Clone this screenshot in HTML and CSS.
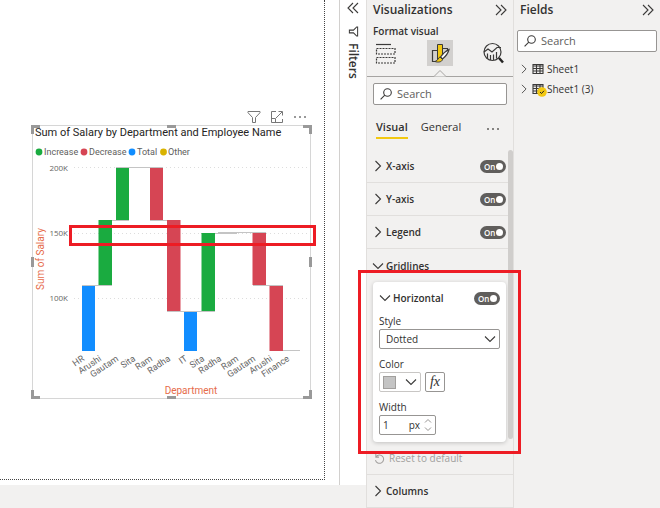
FILE: index.html
```html
<!DOCTYPE html>
<html lang="en">
<head>
<meta charset="utf-8">
<title>Report editor</title>
<link rel="stylesheet" href="styles.css">
</head>
<body>
<svg class="defs" aria-hidden="true">
  <symbol id="chevron" viewBox="0 0 12 12"><path d="M3.5 1 8.5 6l-5 5"/></symbol>
  <symbol id="double" viewBox="0 0 12 12"><path d="M1 1l5 5-5 5M6 1l5 5-5 5"/></symbol>
  <symbol id="lens" viewBox="0 0 12 12"><circle cx="7.5" cy="4.5" r="3.8"/><path d="M4.8 7.2.6 11.4"/></symbol>
  <symbol id="table" viewBox="0 0 12 12"><path d="M1 1.5h10v9H1zM1 3h10M1 5.5h10M1 8h10M4.5 2v8.500M8 2v8.500"/></symbol>
</svg>
<div class="app">
  <main class="canvas">
    <div class="sheet">
      <div class="visual-tools">
        <button aria-label="Filter"><svg class="icon tool" viewBox="0 0 14 14"><path d="M1 1.500h12v1.200L8.500 7.500v5h-3v-5L1 2.700z"/></svg></button>
        <button aria-label="Focus mode"><svg class="icon tool" viewBox="0 0 14 14"><path d="M6 1.500H1.500v11h11V9M1.500 8.500h4v4M6 8l6-6M8.500 1.500h4v4"/></svg></button>
        <button aria-label="More options"><svg class="icon tool dots" viewBox="0 0 14 14"><circle cx="2" cy="7" r="1"/><circle cx="7" cy="7" r="1"/><circle cx="12" cy="7" r="1"/></svg></button>
      </div>
      <figure class="visual">
        <svg class="chart" viewBox="31 125 281 274" role="img" aria-label="Sum of Salary by Department and Employee Name">
          <rect class="frame" x="32.500" y="125.500" width="278" height="273"/>
          <g class="handle">
            <path d="M31 125h9v3h-6v6h-3zM312 125h-9v3h6v6h3zM31 399h9v-3h-6v-6h-3zM312 399h-9v-3h6v-6h3z"/>
            <path d="M167 125h9v3h-9zM167 396h9v3h-9zM31 257h3v10h-3zM309 257h3v10h-3z"/>
          </g>
          <text class="title" x="35" y="136">Sum of Salary by Department and Employee Name</text>
          <g class="legend">
            <circle class="inc" cx="39" cy="152" r="3.400"/><text x="44" y="155">Increase</text>
            <circle class="dec" cx="84" cy="152" r="3.400"/><text x="89" y="155">Decrease</text>
            <circle class="tot" cx="132" cy="152" r="3.400"/><text x="137" y="155">Total</text>
            <circle class="oth" cx="163.500" cy="152" r="3.400"/><text x="168" y="155">Other</text>
          </g>
          <path class="grid" d="M74 167.500H307M74 233.500H307M74 298.500H307"/>
          <g class="ticks"><text x="68" y="171">200K</text><text x="68" y="236">150K</text><text x="68" y="301">100K</text></g>
          <path class="link" d="M82 285.500H112M99 220.500H129M116 167.500H163M150 220.500H180M167 311.500H215M201 233.500H237M218 232.500H266M253 285.500H283M270 350.500H300"/>
          <path class="tot" d="M82 286h13v65H82zM184 312h13v39h-13z"/>
          <path class="inc" d="M98.500 220H112v65H98.500zM116 168h13v52h-13zM201.500 233H215v78h-13.500z"/>
          <path class="dec" d="M150 168h13v52h-13zM167 220h13.500v91H167zM252.500 233H266v52h-13.500zM269.500 286H283v65h-13.500z"/>
          <g class="names">
            <text transform="translate(85 360) rotate(-34)">HR</text>
            <text transform="translate(102 360) rotate(-34)">Arushi</text>
            <text transform="translate(119 360) rotate(-34)">Gautam</text>
            <text transform="translate(136 360) rotate(-34)">Sita</text>
            <text transform="translate(153 360) rotate(-34)">Ram</text>
            <text transform="translate(171 360) rotate(-34)">Radha</text>
            <text transform="translate(188 360) rotate(-34)">IT</text>
            <text transform="translate(205 360) rotate(-34)">Sita</text>
            <text transform="translate(222 360) rotate(-34)">Radha</text>
            <text transform="translate(239 360) rotate(-34)">Ram</text>
            <text transform="translate(256 360) rotate(-34)">Gautam</text>
            <text transform="translate(273 360) rotate(-34)">Arushi</text>
            <text transform="translate(290 360) rotate(-34)">Finance</text>
          </g>
          <text class="axis" x="191" y="394">Department</text>
          <text class="axis" transform="translate(44 259) rotate(-90)">Sum of Salary</text>
        </svg>
        <div class="callout gridline-callout"></div>
      </figure>
    </div>
  </main>

  <aside class="filters">
    <button aria-label="Expand filters"><svg class="icon flip" viewBox="0 0 12 12"><use href="#double"/></svg></button>
    <svg class="icon funnel" viewBox="0 0 12 12"><path d="M10.500 1v10h-1L6 7.500H1.500v-3H6L9.500 1z"/></svg>
    <span class="filters-name">Filters</span>
  </aside>

  <section class="pane viz">
    <header class="pane-head"><h2>Visualizations</h2><button aria-label="Collapse visualizations"><svg class="icon" viewBox="0 0 12 12"><use href="#double"/></svg></button></header>
    <h3 class="sub">Format visual</h3>
    <nav class="modes">
      <button aria-label="Build visual"><svg class="mode-icon" viewBox="0 0 26 26"><path class="s" d="M3 4.500h15"/><path class="s dash" d="M3.500 8.500h18.500v5.500H3.500zM3.500 17.500h18.500v5.500H3.500z"/></svg></button>
      <button class="current" aria-label="Format visual"><svg class="mode-icon" viewBox="0 0 26 26"><path class="s" d="M10 10.500H5.500v11H10M16 8.500h4.500v4"/><path class="y" d="M10.500 4.500h5V19l-5 2z"/><path class="w" d="M22 9.500c-4 2-7 5-8.500 7.500l2 2C18 17 21 13.500 22 9.500z"/><path class="y" d="M13 17c-2 .5-1.500 3.500-5 4.500 3 1.200 7 .5 7.500-2z"/></svg></button>
      <button aria-label="Analytics"><svg class="mode-icon" viewBox="0 0 26 26"><circle class="s" cx="11.500" cy="12" r="8.500"/><path class="s" d="m3 12 4-3 4 3 5-4.500h4M6.500 13.500v5M9.500 15v5M12.500 14.500v5.500M15.500 12v6.500"/><path class="thick" d="m18 18 4 4.500"/></svg></button>
      <svg class="pointer" viewBox="0 0 14 7"><path d="M0 6.500h1L7 .5l6 6h1"/></svg>
    </nav>
    <label class="search"><svg class="icon" viewBox="0 0 12 12"><use href="#lens"/></svg><input type="text" placeholder="Search" aria-label="Search visualizations"></label>
    <div class="tabs"><button class="tab current">Visual</button><button class="tab">General</button><button class="more" aria-label="More options"><svg class="icon dots" viewBox="0 0 14 14"><circle cx="2" cy="7" r="1"/><circle cx="7" cy="7" r="1"/><circle cx="12" cy="7" r="1"/></svg></button></div>

    <div class="settings">
      <div class="row"><button class="name"><svg class="icon" viewBox="0 0 12 12"><use href="#chevron"/></svg>X-axis</button><label class="toggle"><input type="checkbox" checked aria-label="X-axis"><span>On</span></label></div>
      <div class="row"><button class="name"><svg class="icon" viewBox="0 0 12 12"><use href="#chevron"/></svg>Y-axis</button><label class="toggle"><input type="checkbox" checked aria-label="Y-axis"><span>On</span></label></div>
      <div class="row"><button class="name"><svg class="icon" viewBox="0 0 12 12"><use href="#chevron"/></svg>Legend</button><label class="toggle"><input type="checkbox" checked aria-label="Legend"><span>On</span></label></div>
      <div class="group">
        <div class="row open"><button class="name"><svg class="icon down" viewBox="0 0 12 12"><use href="#chevron"/></svg>Gridlines</button></div>
        <div class="card">
          <div class="card-head"><button class="name"><svg class="icon down" viewBox="0 0 12 12"><use href="#chevron"/></svg>Horizontal</button><label class="toggle"><input type="checkbox" checked aria-label="Horizontal"><span>On</span></label></div>
          <label class="field-name" for="style">Style</label>
          <div class="select"><select id="style"><option>Dotted</option></select><svg class="icon down" viewBox="0 0 12 12"><use href="#chevron"/></svg></div>
          <label class="field-name" for="color">Color</label>
          <div class="color-line"><button class="color" id="color"><span class="swatch"></span><svg class="icon down" viewBox="0 0 12 12"><use href="#chevron"/></svg></button><button class="fx" aria-label="Conditional formatting">fx</button></div>
          <label class="field-name" for="width">Width</label>
          <div class="number"><input id="width" type="text" inputmode="numeric" value="1"><span>px</span><svg class="spin" viewBox="0 0 8 14"><path d="m1 4.500 3-3 3 3M1 9.500l3 3 3-3"/></svg></div>
        </div>
        <button class="reset"><svg class="icon" viewBox="0 0 12 12"><path d="M2 1v3.500h3.500M2.200 4.300a4.500 4.500 0 1 1-.6 3.500"/></svg>Reset to default</button>
        <div class="callout settings-callout"></div>
      </div>
      <div class="row"><button class="name"><svg class="icon" viewBox="0 0 12 12"><use href="#chevron"/></svg>Columns</button></div>
      <div class="scrollbar"></div>
    </div>
  </section>

  <section class="pane fields">
    <header class="pane-head"><h2>Fields</h2><button aria-label="Collapse fields"><svg class="icon" viewBox="0 0 12 12"><use href="#double"/></svg></button></header>
    <label class="search"><svg class="icon" viewBox="0 0 12 12"><use href="#lens"/></svg><input type="text" placeholder="Search" aria-label="Search fields"></label>
    <ul class="tree">
      <li><svg class="icon small" viewBox="0 0 12 12"><use href="#chevron"/></svg><svg class="icon" viewBox="0 0 12 12"><use href="#table"/></svg>Sheet1</li>
      <li><svg class="icon small" viewBox="0 0 12 12"><use href="#chevron"/></svg><span class="marked"><svg class="icon" viewBox="0 0 12 12"><use href="#table"/></svg><svg class="badge" viewBox="0 0 10 10"><circle cx="5" cy="5" r="4.800"/><path d="m3 5 1.500 1.500L7 3.800"/></svg></span>Sheet1 (3)</li>
    </ul>
  </section>
</div>
</body>
</html>
```
FILE: styles.css
```css
* { box-sizing: border-box; }
body {
  margin: 0;
  background: #f2f1f0;
  color: #323130;
  font: 11px/16px "Open Sans", "Noto Sans", sans-serif;
}
button { padding: 0; border: 0; background: none; color: inherit; font: inherit; text-align: left; }
input, select { min-width: 0; margin: 0; padding: 0; border: 0; background: none; color: inherit; font: inherit; outline: 0; }
h2, h3, figure, ul { margin: 0; padding: 0; }
.defs { position: absolute; width: 0; height: 0; }
.icon { display: block; flex: none; width: 12px; height: 12px; fill: none; stroke: #3b3a39; stroke-width: 1.1; }
.down { transform: rotate(90deg); }
.flip { transform: scaleX(-1); }
.dots { fill: #605e5c; stroke: none; width: 14px; height: 14px; }

.app {
  display: grid;
  grid-template-columns: minmax(0, 1fr) 27px 147px 147px;
  min-height: 100vh;
  overflow: hidden;
}

/* Report canvas */
.canvas { margin-bottom: 23px; padding: 0 14px 5px 0; background: #fff; }
.sheet { height: 100%; padding: 110px 12px 0 31px; border: dotted #444; border-width: 0 1px 1px 0; }
.visual-tools { display: flex; justify-content: flex-end; gap: 9px; padding: 0 5px 1px 0; }
.tool { width: 14px; height: 14px; stroke: #777; stroke-width: 1; }
.tool.dots { fill: #777; stroke: none; }
.visual { position: relative; }
.chart { display: block; width: 100%; overflow: visible; }
.chart text { font-family: "Open Sans", "Noto Sans", sans-serif; }
.frame { fill: none; stroke: #d6d6d6; }
.handle { fill: #999; }
.chart .title { font: 11px Roboto, sans-serif; fill: #252423; }
.chart .legend text { font: 9px Roboto, sans-serif; fill: #605e5c; }
.ticks text { font-size: 8px; fill: #666; text-anchor: end; }
.chart .names text { font: 9px Roboto, sans-serif; fill: #666; text-anchor: end; }
.chart .axis { font: 10px Roboto, sans-serif; fill: #e66c4b; text-anchor: middle; }
.inc { fill: #1aab40; }
.dec { fill: #d64554; }
.tot { fill: #118dff; }
.oth { fill: #d9b300; }
.grid { fill: none; stroke: #ddd; stroke-dasharray: 1 3; }
.link { fill: none; stroke: #c4c4c4; }
.callout { position: absolute; border: 3px solid #ed1c24; pointer-events: none; }
.gridline-callout { inset: 100px -4px auto 38px; height: 21px; }

/* Collapsed filters */
.filters {
  display: flex;
  flex-direction: column;
  align-items: center;
  gap: 12px;
  margin-bottom: 23px;
  padding-top: 2px;
  border-left: 1px solid #d2d0ce;
  background: #fff;
}
.funnel { width: 11px; height: 11px; }
.filters-name { writing-mode: vertical-rl; margin-top: -6px; font-size: 12px; font-weight: 600; }

/* Panes */
.pane { border-left: 1px solid #e1dfdd; }
.pane-head { display: flex; align-items: center; justify-content: space-between; height: 20px; padding: 0 6px; }
.pane-head h2 { font-size: 12px; font-weight: 600; }
.sub { padding: 3px 6px 0; font-size: 10px; font-weight: 600; }
.modes {
  position: relative;
  display: flex;
  justify-content: space-between;
  padding: 1px 6px 10px;
  border-bottom: 1px solid #a6a4a2;
}
.modes .current { background: #d2d0ce; }
.mode-icon { display: block; width: 26px; height: 26px; fill: none; stroke-width: 1.2; }
.s { stroke: #3b3a39; }
.dash { stroke-dasharray: 2 1; }
.y { fill: #f2c811; stroke: #3b3a39; stroke-width: 1; }
.w { fill: #fff; stroke: #3b3a39; }
.thick { stroke: #252423; stroke-width: 2.500; }
.pointer { position: absolute; bottom: -1px; left: calc(50% - 7px); width: 14px; height: 7px; fill: #f2f1f0; stroke: #a6a4a2; }
.search {
  display: flex;
  align-items: center;
  gap: 5px;
  height: 22px;
  margin: 6px 6px 0;
  padding: 0 6px;
  border: 1px solid #979593;
  border-radius: 2px;
  background: #fff;
}
.search input { flex: 1; width: 0; }
.search input::placeholder { color: #605e5c; opacity: 1; }
.tabs { display: flex; align-items: center; gap: 13px; padding: 13px 13px 11px 9px; }
.tab { padding-bottom: 2px; border-bottom: 2px solid transparent; font-size: 11px; line-height: 17px; }
.tab.current { border-color: #f2c811; font-weight: 600; }
.more { margin-left: auto; }

/* Format settings */
.settings { position: relative; }
.row { display: flex; align-items: center; justify-content: space-between; height: 33px; padding: 0 7px 0 5px; border-bottom: 1px solid #e1dfdd; }
.row.open { border: 0; }
.name { display: flex; align-items: center; gap: 2px; font-size: 10px; font-weight: 600; }
.toggle { position: relative; display: block; width: 26px; height: 13px; border-radius: 7px; background: #605e5c; color: #fff; }
.toggle input { position: absolute; top: 3px; right: 3px; width: 7px; height: 7px; border-radius: 50%; background: #fff; appearance: none; }
.toggle span { display: block; padding-left: 4px; font-size: 8px; font-weight: 600; line-height: 13px; }
.group { position: relative; padding-bottom: 8px; border-bottom: 1px solid #e1dfdd; }
.card { margin: 0 7px 0 6px; padding: 8px 6px 7px; border-radius: 4px; background: #fff; box-shadow: 0 1px 4px #0003; }
.card-head { display: flex; align-items: center; justify-content: space-between; }
.field-name { display: block; padding: 8px 0 1px; font-size: 10px; line-height: 14px; }
.select { position: relative; }
.select select { display: block; width: 100%; height: 20px; padding-left: 6px; border: 1px solid #979593; border-radius: 2px; appearance: none; font-size: 10px; }
.select .icon { position: absolute; top: 4px; right: 4px; }
.color-line { display: flex; gap: 4px; }
.color { display: flex; align-items: center; justify-content: space-between; width: 42px; height: 20px; padding: 0 3px; border: 1px solid #c8c6c4; border-radius: 2px; }
.swatch { width: 13px; height: 13px; border: 1px solid #a19f9d; background: #c4c4c4; }
.fx { width: 20px; height: 20px; border: 1px solid #979593; border-radius: 2px; font: italic 14px/16px "Liberation Serif", serif; text-align: center; }
.number { display: flex; align-items: center; gap: 4px; width: 57px; height: 20px; padding: 0 3px; border: 1px solid #979593; border-radius: 2px; font-size: 10px; }
.number input { flex: 1; width: 0; }
.spin { width: 8px; height: 14px; fill: none; stroke: #979593; }
.reset { display: flex; align-items: center; gap: 4px; margin-top: 8px; padding-left: 7px; color: #a19f9d; font-size: 10px; }
.reset .icon { width: 11px; height: 11px; stroke: #a19f9d; }
.settings-callout { inset: 21px -8px 20px -9px; z-index: 2; }
.scrollbar { position: absolute; top: 0; right: 0; width: 5px; height: 289px; border-radius: 3px; background: #d0cecc; }

/* Field list */
.fields .search { margin: 10px 3px 7px; }
.tree { list-style: none; font-size: 10px; }
.tree li { display: flex; align-items: center; gap: 3px; height: 20px; padding-left: 5px; }
.small { width: 10px; stroke-width: 1; }
.marked { position: relative; }
.badge { position: absolute; top: 4px; left: 5px; width: 10px; height: 10px; fill: #f2c811; }
.badge path { fill: none; stroke: #252423; }
```
